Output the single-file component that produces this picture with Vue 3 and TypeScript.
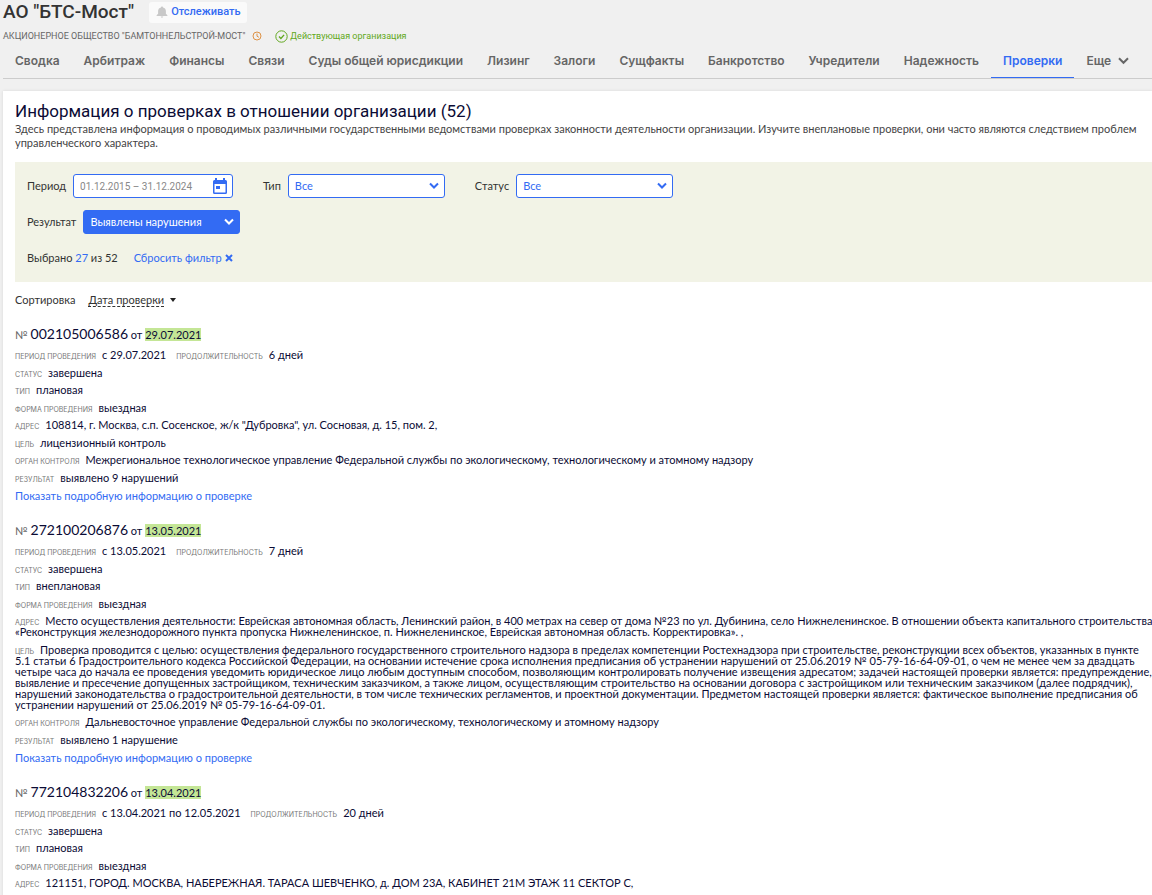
<script setup lang="ts">
import { ref } from 'vue'

interface Field {
  label: string
  value: string
}
interface Inspection {
  number: string
  date: string
  period: string
  duration: string
  fields: Field[]
  showMore: boolean
}

const tabs = [
  'Сводка',
  'Арбитраж',
  'Финансы',
  'Связи',
  'Суды общей юрисдикции',
  'Лизинг',
  'Залоги',
  'Сущфакты',
  'Банкротство',
  'Учредители',
  'Надежность',
  'Проверки',
]
const activeTab = ref('Проверки')

const period = ref('01.12.2015 – 31.12.2024')
const kind = ref('Все')
const status = ref('Все')
const result = ref('Выявлены нарушения')

const inspections: Inspection[] = [
  {
    number: '002105006586',
    date: '29.07.2021',
    period: 'с 29.07.2021',
    duration: '6 дней',
    showMore: true,
    fields: [
      { label: 'Статус', value: 'завершена' },
      { label: 'Тип', value: 'плановая' },
      { label: 'Форма проведения', value: 'выездная' },
      { label: 'Адрес', value: '108814, г. Москва, с.п. Сосенское, ж/к "Дубровка", ул. Сосновая, д. 15, пом. 2,' },
      { label: 'Цель', value: 'лицензионный контроль' },
      {
        label: 'Орган контроля',
        value:
          'Межрегиональное технологическое управление Федеральной службы по экологическому, технологическому и атомному надзору',
      },
      { label: 'Результат', value: 'выявлено 9 нарушений' },
    ],
  },
  {
    number: '272100206876',
    date: '13.05.2021',
    period: 'с 13.05.2021',
    duration: '7 дней',
    showMore: true,
    fields: [
      { label: 'Статус', value: 'завершена' },
      { label: 'Тип', value: 'внеплановая' },
      { label: 'Форма проведения', value: 'выездная' },
      {
        label: 'Адрес',
        value:
          'Место осуществления деятельности: Еврейская автономная область, Ленинский район, в 400 метрах на север от дома №23 по ул. Дубинина, село Нижнеленинское. В отношении объекта капитального строительства:\n«Реконструкция железнодорожного пункта пропуска Нижнеленинское, п. Нижнеленинское, Еврейская автономная область. Корректировка». ,',
      },
      {
        label: 'Цель',
        value:
          'Проверка проводится с целью: осуществления федерального государственного строительного надзора в пределах компетенции Ростехнадзора при строительстве, реконструкции всех объектов, указанных в пункте\n5.1 статьи 6 Градостроительного кодекса Российской Федерации, на основании истечение срока исполнения предписания об устранении нарушений от 25.06.2019 № 05-79-16-64-09-01, о чем не менее чем за двадцать\nчетыре часа до начала ее проведения уведомить юридическое лицо любым доступным способом, позволяющим контролировать получение извещения адресатом; задачей настоящей проверки является: предупреждение,\nвыявление и пресечение допущенных застройщиком, техническим заказчиком, а также лицом, осуществляющим строительство на основании договора с застройщиком или техническим заказчиком (далее подрядчик),\nнарушений законодательства о градостроительной деятельности, в том числе технических регламентов, и проектной документации. Предметом настоящей проверки является: фактическое выполнение предписания об\nустранении нарушений от 25.06.2019 № 05-79-16-64-09-01.',
      },
      {
        label: 'Орган контроля',
        value:
          'Дальневосточное управление Федеральной службы по экологическому, технологическому и атомному надзору',
      },
      { label: 'Результат', value: 'выявлено 1 нарушение' },
    ],
  },
  {
    number: '772104832206',
    date: '13.04.2021',
    period: 'с 13.04.2021 по 12.05.2021',
    duration: '20 дней',
    showMore: false,
    fields: [
      { label: 'Статус', value: 'завершена' },
      { label: 'Тип', value: 'плановая' },
      { label: 'Форма проведения', value: 'выездная' },
      { label: 'Адрес', value: '121151, ГОРОД. МОСКВА, НАБЕРЕЖНАЯ. ТАРАСА ШЕВЧЕНКО, д. ДОМ 23А, КАБИНЕТ 21М ЭТАЖ 11 СЕКТОР С,' },
    ],
  },
]
</script>

<template>
  <div class="page">
    <header class="head">
      <div class="title-row">
        <h1>АО "БТС-Мост"</h1>
        <button type="button" class="track">
          <svg width="12" height="12" viewBox="0 0 12 12" aria-hidden="true">
            <path d="M6 0.4c.6 0 1 .4 1 1C8.900 1.900 9.900 3.300 9.900 5.100v2.700l1.500 1.500v.7H.6v-.7l1.500-1.500V5.100C2.100 3.300 3.100 1.900 5 1.400c0-.6.4-1 1-1zM4.800 10.600h2.400c0 .7-.5 1.200-1.200 1.200s-1.200-.5-1.200-1.200z" fill="#c8c8c8" />
          </svg>
          Отслеживать
        </button>
      </div>
      <div class="name-row">
        <span class="full-name">АКЦИОНЕРНОЕ ОБЩЕСТВО "БАМТОННЕЛЬСТРОЙ-МОСТ"</span>
        <svg width="10" height="10" viewBox="0 0 10 10" fill="none" stroke="#dd9246" aria-hidden="true">
          <circle cx="5" cy="5" r="4" />
          <path d="M5 2.600V5.200L6.900 6.300" />
        </svg>
        <span class="state">
          <svg width="13" height="13" viewBox="0 0 13 13" fill="none" stroke="#62a820" aria-hidden="true">
            <circle cx="6.500" cy="6.500" r="5.700" />
            <path d="M4 6.600l1.900 1.800 3.200-3.500" stroke-width="1.400" />
          </svg>
          Действующая организация
        </span>
      </div>
      <nav class="tabs">
        <a
          v-for="tab in tabs"
          :key="tab"
          href="#"
          :class="{ active: tab === activeTab }"
          @click.prevent="activeTab = tab"
        >{{ tab }}</a>
        <button type="button" class="more">
          Еще
          <svg width="11" height="8" viewBox="0 0 11 8" fill="none" stroke="#666" stroke-width="2" aria-hidden="true">
            <path d="M1 1.200l4.500 4.600L10 1.200" />
          </svg>
        </button>
      </nav>
    </header>

    <main class="card">
      <h2>Информация о проверках в отношении организации (52)</h2>
      <p class="intro">Здесь представлена информация о проводимых различными государственными ведомствами проверках законности деятельности организации. Изучите внеплановые проверки, они часто являются следствием проблем управленческого характера.</p>

      <form class="filter" @submit.prevent>
        <div class="filter-row">
          <div class="field">
            <label for="period">Период</label>
            <div class="box period">
              <input id="period" v-model="period" type="text" />
              <svg class="calendar" width="14" height="16" viewBox="0 0 14 16" aria-hidden="true">
                <path d="M2 0h2v2h6V0h2v2h.5Q14 2 14 3.500v11Q14 16 12.500 16h-11Q0 16 0 14.500v-11Q0 2 1.500 2H2zM1.500 6v8.500h11V6z" fill="#336bf3" fill-rule="evenodd" />
                <rect x="3" y="8" width="4" height="3" fill="#336bf3" />
              </svg>
            </div>
          </div>
          <div class="field">
            <label for="kind">Тип</label>
            <div class="box">
              <select id="kind" v-model="kind">
                <option>Все</option>
                <option>Плановая</option>
                <option>Внеплановая</option>
              </select>
              <svg class="arrow" width="10" height="8" viewBox="0 0 10 8" fill="none" stroke="currentColor" stroke-width="2" aria-hidden="true">
                <path d="M1 1.500l4 4 4-4" />
              </svg>
            </div>
          </div>
          <div class="field">
            <label for="status">Статус</label>
            <div class="box">
              <select id="status" v-model="status">
                <option>Все</option>
                <option>Завершена</option>
              </select>
              <svg class="arrow" width="10" height="8" viewBox="0 0 10 8" fill="none" stroke="currentColor" stroke-width="2" aria-hidden="true">
                <path d="M1 1.500l4 4 4-4" />
              </svg>
            </div>
          </div>
        </div>
        <div class="filter-row">
          <div class="field">
            <label for="result">Результат</label>
            <div class="box filled">
              <select id="result" v-model="result">
                <option>Выявлены нарушения</option>
                <option>Все</option>
              </select>
              <svg class="arrow" width="10" height="8" viewBox="0 0 10 8" fill="none" stroke="currentColor" stroke-width="2" aria-hidden="true">
                <path d="M1 1.500l4 4 4-4" />
              </svg>
            </div>
          </div>
        </div>
        <div class="filter-row summary">
          <span>Выбрано <span class="count">27</span> из 52</span>
          <button type="reset" class="reset">
            Сбросить фильтр
            <svg width="8" height="8" viewBox="0 0 8 8" stroke="currentColor" stroke-width="2" aria-hidden="true">
              <path d="M1 1l6 6M7 1L1 7" />
            </svg>
          </button>
        </div>
      </form>

      <div class="sort">
        <span>Сортировка</span>
        <button type="button">
          <span class="sort-name">Дата проверки</span>
          <svg width="6" height="4" viewBox="0 0 6 4" aria-hidden="true"><path d="M0 0h6L3 4z" fill="#222" /></svg>
        </button>
      </div>

      <article v-for="item in inspections" :key="item.number" class="item">
        <h3><span class="sign">№</span> <span class="number">{{ item.number }}</span> от <mark>{{ item.date }}</mark></h3>
        <div class="row">
          <span class="label">Период проведения</span><span class="term">{{ item.period }}</span>
          <span class="label">Продолжительность</span>{{ item.duration }}
        </div>
        <div v-for="field in item.fields" :key="field.label" class="row">
          <span class="label">{{ field.label }}</span><span class="value">{{ field.value }}</span>
        </div>
        <a v-if="item.showMore" href="#" class="details" @click.prevent>Показать подробную информацию о проверке</a>
      </article>
    </main>
  </div>
</template>

<style>
html {
  background: #f0f0f0;
}
body {
  margin: 0;
  overflow: hidden;
}
</style>

<style scoped>
.page {
  height: 100vh;
  overflow: hidden;
  padding-left: 3px;
  background: #f0f0f0;
  color: #333;
  font: 11px/14px Lato, "Liberation Sans", sans-serif;
}
button,
input,
select {
  font: inherit;
  color: inherit;
  border: 0;
  padding: 0;
  margin: 0;
  background: none;
}
button {
  cursor: pointer;
}
a {
  color: #336bf3;
  text-decoration: none;
}
h1,
h2,
.track,
.name-row {
  font-family: Roboto, "Liberation Sans", sans-serif;
}
.title-row {
  display: flex;
  align-items: center;
  gap: 15px;
  height: 24px;
}
h1 {
  margin: 0;
  font-size: 19px;
  line-height: 22px;
  font-weight: 500;
}
.track {
  display: flex;
  align-items: center;
  gap: 3px;
  height: 21px;
  padding: 0 6px 0 7px;
  border-radius: 3px;
  background: #fafafa;
  color: #336bf3;
  font-weight: 500;
}
.name-row {
  display: flex;
  align-items: center;
  height: 24px;
  gap: 7px;
  font-size: 9px;
}
.full-name {
  color: #666;
}
.state {
  display: flex;
  align-items: center;
  gap: 2px;
  margin-left: 6px;
  color: #62a820;
}
.tabs {
  display: flex;
  height: 30px;
  border-bottom: 1px solid #ccc;
  font-family: Inter, "Liberation Sans", sans-serif;
  font-size: 12px;
  line-height: 26px;
  font-weight: 600;
}
.tabs a,
.more {
  padding: 0 12px;
  color: #666;
  white-space: nowrap;
}
.tabs a.active {
  color: #336bf3;
  border-bottom: 1px solid #336bf3;
}
.more {
  display: flex;
  align-items: center;
  gap: 7px;
  height: 26px;
}
.card {
  margin-top: 12px;
  padding: 10px 0 20px 12px;
  background: #fff;
  box-shadow: 0 0 3px rgba(0, 0, 0, 0.1);
}
h2 {
  margin: 0;
  color: #0b0b35;
  font-size: 17px;
  line-height: 20px;
  font-weight: 400;
}
.intro {
  margin: 1px 0 12px;
  color: #444;
}
.filter {
  padding: 12px;
  height: 96px;
  background: #f2f3e6;
}
.filter-row {
  display: flex;
  align-items: center;
  gap: 30px;
  height: 24px;
  margin-bottom: 12px;
}
.field {
  display: flex;
  align-items: center;
  gap: 7px;
}
.box {
  position: relative;
  display: flex;
  align-items: center;
  box-sizing: border-box;
  width: 157px;
  height: 24px;
  border: 1px solid #336bf3;
  border-radius: 3px;
  background: #fff;
  color: #336bf3;
}
.period {
  width: 160px;
  color: #888;
}
.box input,
.box select {
  width: 100%;
  height: 22px;
  padding: 0 6px;
  appearance: none;
  outline: none;
}
.box.filled {
  background: #336bf3;
  color: #fff;
}
.box input {
  font-family: Roboto, "Liberation Sans", sans-serif;
  font-size: 10px;
}
.arrow,
.calendar {
  position: absolute;
  right: 5px;
  pointer-events: none;
}
.summary {
  gap: 16px;
}
.count,
.reset {
  color: #336bf3;
}
.reset {
  display: flex;
  align-items: center;
  gap: 3px;
}
.sort {
  display: flex;
  align-items: center;
  gap: 13px;
  margin: 11px 0 19px;
}
.sort button {
  display: flex;
  align-items: center;
  gap: 6px;
}
.sort-name {
  line-height: 12px;
  border-bottom: 1px dashed #333;
}
.item {
  margin-bottom: 19px;
  color: #0b0b35;
}
h3 {
  margin: 0 0 6px;
  font-size: 11px;
  line-height: 16px;
  font-weight: 400;
}
.sign {
  color: #666;
}
.number {
  font-size: 14px;
}
mark {
  background: #c4e696;
  color: inherit;
}
.row {
  line-height: 11px;
  margin-bottom: 6px;
  white-space: nowrap;
}
.row:nth-child(even) {
  margin-bottom: 7px;
}
.value {
  white-space: pre;
}
.label {
  margin-right: 6px;
  color: #777;
  font-family: Inter, "Liberation Sans", sans-serif;
  font-size: 7px;
  line-height: 0;
  text-transform: uppercase;
}
.term {
  margin-right: 10px;
}
.details {
  display: block;
}
</style>
